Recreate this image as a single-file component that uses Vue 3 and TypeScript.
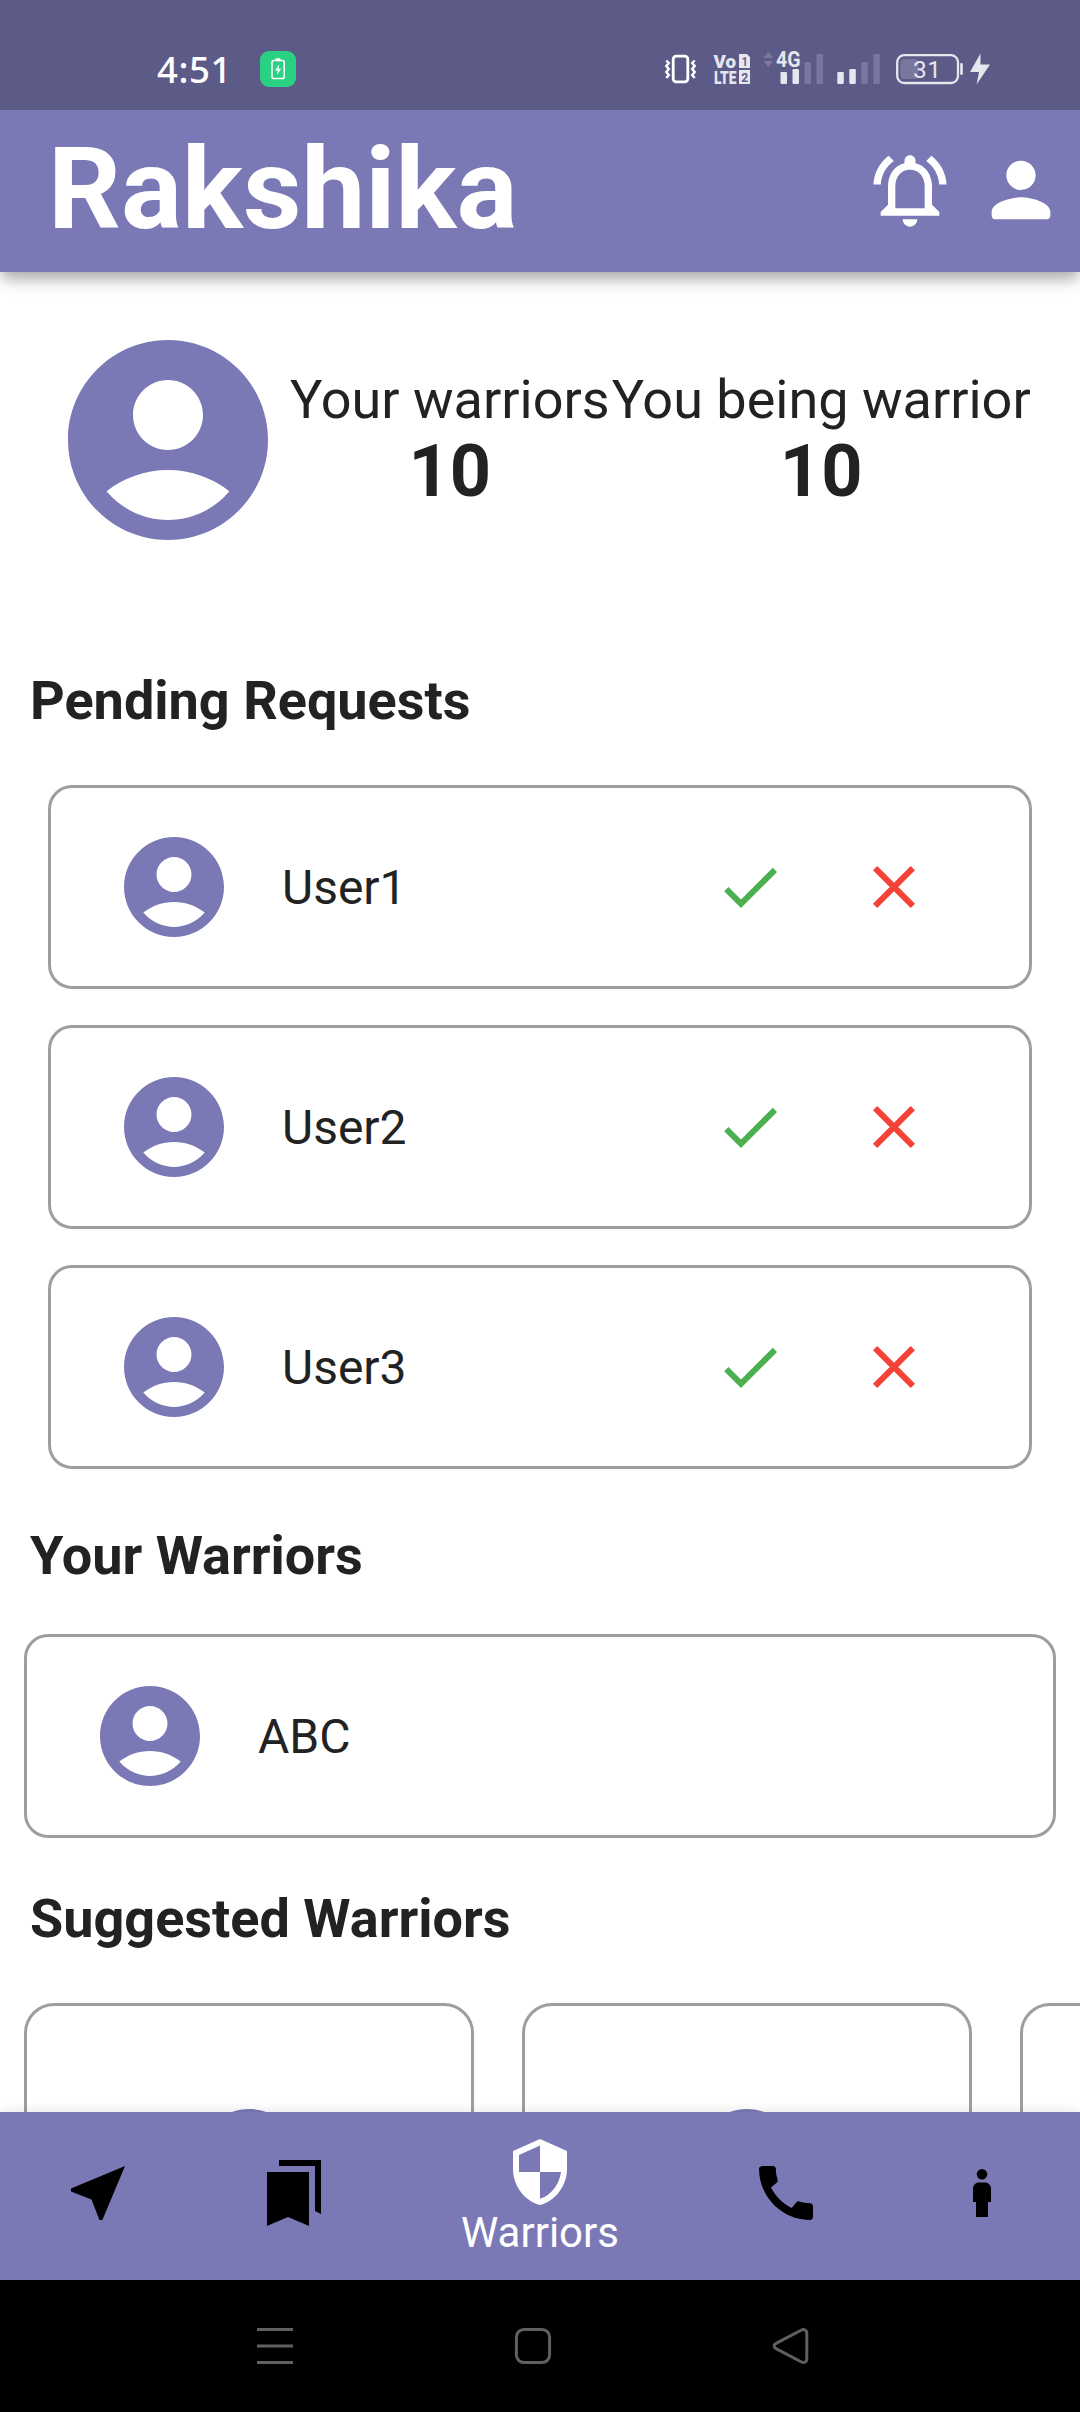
<script setup lang="ts">
interface Bar { x: number; y: number; on: boolean }

const accountPath = 'M12 2C6.48 2 2 6.48 2 12s4.48 10 10 10 10-4.48 10-10S17.52 2 12 2zm0 4c1.93 0 3.5 1.57 3.5 3.5S13.93 13 12 13s-3.5-1.57-3.5-3.5S10.07 6 12 6zm0 14c-2.03 0-4.43-.82-6.14-2.88C7.55 15.8 9.68 15 12 15s4.45.8 6.14 2.12C16.43 19.18 14.03 20 12 20z'

const bars: Bar[] = [
  { x: 0, y: 18, on: true },
  { x: 12, y: 15, on: true },
  { x: 24, y: 8, on: false },
  { x: 36, y: 0, on: false },
]

const stats: { label: string; value: number }[] = [
  { label: 'Your warriors', value: 10 },
  { label: 'You being warrior', value: 10 },
]
const requests: string[] = ['User1', 'User2', 'User3']
const warriors: string[] = ['ABC']
const suggestions: number[] = [1, 2, 3]
</script>

<template>
  <div class="screen">
    <header class="top">
      <div class="status">
        <span class="clock">4:51</span>
        <svg class="charge" width="36" height="36" viewBox="0 0 36 36">
          <rect width="36" height="36" rx="9" fill="#2bd182" />
          <rect x="15.5" y="7.2" width="5" height="3" rx="1" fill="#fff" />
          <rect x="12" y="9.6" width="12.2" height="18" rx="1.8" fill="none" stroke="#fff" stroke-width="1.5" />
          <path d="M19.2 13.5l-4.2 6h2.7l-.7 4.2 4.3-6h-2.8z" fill="#fff" />
        </svg>
        <svg class="indicators" width="330" height="40" viewBox="662 48 330 40">
          <rect x="673.2" y="56.2" width="14.6" height="25.6" rx="3" fill="none" stroke="#fff" stroke-width="2.8" />
          <path d="M666.300 60.500l2.500 2.500-2.500 3 2.500 3-2.500 3 2.500 3-2.500 3M694.700 60.500l-2.500 2.500 2.500 3-2.500 3 2.500 3-2.500 3 2.500 3" fill="none" stroke="#fff" stroke-width="2.4" />
          <g fill="#e6e6ee" font-family="Roboto, sans-serif" font-weight="700">
            <text x="713.5" y="67.5" font-size="18" textLength="22.5" lengthAdjust="spacingAndGlyphs" font-weight="900">Vo</text>
            <text x="714" y="84" font-size="18.5" textLength="22.5" lengthAdjust="spacingAndGlyphs" font-weight="900">LTE</text>
            <path d="M739 54h8l3 3v11h-11zM739 70h11v14h-11z" />
            <g fill="#5c5b88">
              <text x="741.7" y="66" font-size="13" textLength="6" lengthAdjust="spacingAndGlyphs">1</text>
              <text x="741.2" y="82" font-size="13" textLength="7" lengthAdjust="spacingAndGlyphs">2</text>
            </g>
            <text x="776" y="67.2" font-size="21.5" textLength="24.500" lengthAdjust="spacingAndGlyphs">4G</text>
          </g>
          <path d="M768.3 52l5 6h-10zM768.3 67l5-6h-10z" fill="#7a799f" />
          <g v-for="start in [780.5, 837.3]" :key="start">
            <rect
              v-for="b in bars" :key="b.x" :x="start + b.x" :y="54 + b.y" width="6.5" :height="30 - b.y" rx="1.2"
              :fill="b.on ? '#e6e6ee' : '#78779f'"
            />
          </g>
          <rect x="900.5" y="59" width="18" height="20" rx="4" fill="#78779f" />
          <rect x="897.2" y="55.2" width="60.8" height="27.8" rx="7" fill="none" stroke="#e6e6ee" stroke-width="2.3" />
          <rect x="960.2" y="63" width="2.6" height="12" rx="1.2" fill="#e6e6ee" />
          <text x="913" y="78.3" font-family="Roboto, sans-serif" font-size="24.5" textLength="28" fill="#e6e6ee">31</text>
          <path d="M980.500 53.500L970 72h9l-2.400 12.500L990 64.500h-9.500z" fill="#e6e6ee" />
        </svg>
      </div>
      <div class="appbar">
        <h1>Rakshika</h1>
        <svg class="action" viewBox="0 0 24 24"><path d="M12 22c1.1 0 2-.9 2-2h-4c0 1.1.9 2 2 2zm6-6v-5c0-3.07-1.63-5.64-4.5-6.32V4c0-.83-.67-1.5-1.5-1.5s-1.5.67-1.5 1.5v.68C7.64 5.36 6 7.92 6 11v5l-2 2v1h16v-1l-2-2zm-2 1H8v-6c0-2.48 1.51-4.5 4-4.5s4 2.02 4 4.5v6zM7.58 4.08L6.15 2.65C3.75 4.48 2.17 7.3 2.03 10.5h2c.15-2.65 1.51-4.97 3.55-6.42zm12.39 6.42h2c-.15-3.2-1.73-6.02-4.12-7.85l-1.42 1.43c2.02 1.45 3.39 3.77 3.54 6.42z" /></svg>
        <svg class="action" viewBox="0 0 24 24"><path d="M12 12c2.21 0 4-1.79 4-4s-1.79-4-4-4-4 1.79-4 4 1.79 4 4 4zm0 2c-2.67 0-8 1.34-8 4v1c0 .55.45 1 1 1h14c.55 0 1-.45 1-1v-1c0-2.66-5.33-4-8-4z" /></svg>
      </div>
    </header>

    <main class="body">
      <section class="profile">
        <svg class="avatar large" viewBox="0 0 24 24"><path :d="accountPath" /></svg>
        <div v-for="s in stats" :key="s.label" class="stat">
          <span class="stat-label">{{ s.label }}</span>
          <strong class="stat-value">{{ s.value }}</strong>
        </div>
      </section>

      <h2 class="pending">Pending Requests</h2>
      <ul class="requests">
        <li v-for="name in requests" :key="name" class="card">
          <svg class="avatar" viewBox="0 0 24 24"><path :d="accountPath" /></svg>
          <span class="name">{{ name }}</span>
          <button class="act yes" aria-label="Accept"><svg viewBox="0 0 24 24"><path d="M9 16.17L4.83 12l-1.42 1.41L9 19 21 7l-1.41-1.41z" /></svg></button>
          <button class="act no" aria-label="Decline"><svg viewBox="0 0 24 24"><path d="M19 6.41L17.59 5 12 10.59 6.41 5 5 6.41 10.59 12 5 17.59 6.41 19 12 13.41 17.59 19 19 17.59 13.41 12z" /></svg></button>
        </li>
      </ul>

      <h2 class="yours">Your Warriors</h2>
      <ul class="warriors">
        <li v-for="name in warriors" :key="name" class="card">
          <svg class="avatar" viewBox="0 0 24 24"><path :d="accountPath" /></svg>
          <span class="name">{{ name }}</span>
        </li>
      </ul>

      <h2 class="suggested">Suggested Warriors</h2>
      <div class="suggestions">
        <div v-for="n in suggestions" :key="n" class="tile">
          <svg class="avatar" viewBox="0 0 24 24"><path :d="accountPath" /></svg>
        </div>
      </div>
    </main>

    <nav class="tabs">
      <div class="tab"><svg viewBox="0 0 24 24"><path d="M21 3L3 10.53v.98l6.84 2.65L12.48 21h.98L21 3z" /></svg></div>
      <div class="tab"><svg viewBox="0 0 24 24"><path d="M19 18l2 1V1H7v2h12v15zM17 5H3v18l7-3 7 3V5z" /></svg></div>
      <div class="tab active">
        <svg viewBox="0 0 24 24"><path d="M12 1L3 5v6c0 5.55 3.84 10.74 9 12 5.16-1.26 9-6.45 9-12V5l-9-4zm0 10.99h7c-.53 4.12-3.28 7.79-7 8.94V12H5V6.3l7-3.11v8.8z" /></svg>
        <span>Warriors</span>
      </div>
      <div class="tab"><svg viewBox="0 0 24 24"><path d="M20.01 15.38c-1.23 0-2.42-.2-3.53-.56-.35-.12-.74-.03-1.01.24l-1.57 1.97c-2.83-1.35-5.48-3.9-6.89-6.83l1.95-1.66c.27-.28.35-.67.24-1.02-.37-1.11-.56-2.3-.56-3.53 0-.54-.45-.99-.99-.99H4.19C3.65 3 3 3.24 3 3.99 3 13.28 10.73 21 20.01 21c.71 0 .99-.63.99-1.18v-3.45c0-.54-.45-.99-.99-.99z" /></svg></div>
      <div class="tab"><svg viewBox="0 0 24 24"><circle cx="12" cy="5.75" r="1.75" /><path d="M10 20h4v-5h1v-4.5c0-1.1-.9-2-2-2h-2c-1.1 0-2 .9-2 2V15h1z" /></svg></div>
    </nav>

    <footer class="system">
      <svg viewBox="0 0 40 40"><path d="M2 3.5h36M2 20h36M2 36.5h36" /></svg>
      <svg viewBox="0 0 40 40"><rect x="3.4" y="3.4" width="33.2" height="33.2" rx="7.5" /></svg>
      <svg viewBox="0 0 40 40"><path d="M4.600 17.600L30.500 4c2.600-1.300 5.300.2 5.300 3v26c0 2.800-2.700 4.300-5.300 3L4.600 22.400c-2-1.100-2-3.700 0-4.800z" /></svg>
    </footer>
  </div>
</template>

<style>
body { margin: 0; background: #fff; }
</style>

<style scoped>
.screen {
  width: 1080px;
  height: 2412px;
  display: flex;
  flex-direction: column;
  overflow: hidden;
  background: #fff;
  color: #222;
  font-family: Roboto, sans-serif;
}
.top { position: relative; z-index: 2; background: #7b79b5; color: #fff; box-shadow: 0 12px 15px -3px rgba(0, 0, 0, .2), 0 5px 12px rgba(0, 0, 0, .16); }
.status { height: 110px; box-sizing: border-box; padding: 48px 88px 0 157px; display: flex; align-items: flex-start; background: #5c5b88; }
.clock { width: 103px; font: 500 36.5px/43px "Noto Sans", sans-serif; letter-spacing: .6px; }
.charge { margin-top: 3px; }
.indicators { margin-left: auto; }
.appbar { height: 162px; box-sizing: border-box; padding: 0 15px 0 48px; display: flex; align-items: center; }
h1 { margin: 0 auto 4px 0; font-size: 114px; line-height: 134px; font-weight: 700; }
.action { width: 88px; height: 88px; margin: 0 0 2px 23px; fill: #fff; }
.body { flex: 1; min-height: 0; overflow: hidden; }
.profile { display: flex; align-items: center; height: 240px; margin-top: 48px; padding-left: 48px; }
.avatar { width: 120px; height: 120px; flex: none; fill: #7b79b5; }
.avatar.large { width: 240px; height: 240px; }
.stat { display: flex; flex-direction: column; align-items: center; margin-left: 2px; white-space: nowrap; }
.stat-label { font-size: 54px; line-height: 63px; }
.stat-value { font-size: 72px; line-height: 82px; }
h2 { margin: 0; padding-left: 30px; font-size: 54px; line-height: 63px; font-weight: 700; }
.pending { margin-top: 109px; }
ul { list-style: none; margin: 0; padding: 0; }
.requests { display: flex; flex-direction: column; gap: 36px; margin: 53px 48px 0; }
.card { box-sizing: border-box; height: 204px; display: flex; align-items: center; padding: 0 63px; border: 3px solid #9e9e9e; border-radius: 24px; }
.name { margin: 2px auto 0 48px; font-size: 48px; line-height: 56px; }
.act { width: 144px; height: 144px; padding: 36px; border: 0; background: none; }
.act svg { display: block; width: 72px; height: 72px; }
.yes { fill: #4caf50; }
.no { fill: #f44336; }
.yours { margin-top: 55px; }
.warriors { margin: 47px 24px 0; }
.suggested { margin-top: 49px; }
.suggestions { display: flex; gap: 48px; margin: 53px 0 0 24px; }
.tile { flex: none; box-sizing: border-box; width: 450px; height: 450px; padding-top: 93px; border: 3px solid #9e9e9e; border-radius: 30px; display: flex; justify-content: center; }
.tabs { position: relative; flex: none; height: 168px; display: flex; background: #7b79b5; box-shadow: 0 0 12px rgba(0, 0, 0, .12); }
.tab { width: 196px; padding-bottom: 6px; box-sizing: border-box; display: flex; flex-direction: column; align-items: center; justify-content: center; }
.tab svg { width: 72px; height: 72px; }
.tab.active { width: 296px; color: #fff; fill: #fff; justify-content: flex-start; padding-top: 24px; }
.tab span { font-size: 42px; line-height: 49px; }
.system { flex: none; height: 132px; display: flex; justify-content: center; align-items: center; gap: 218px; padding-right: 14px; box-sizing: border-box; background: #000; }
.system svg { width: 40px; height: 40px; fill: none; stroke: #606060; stroke-width: 3; }
</style>
